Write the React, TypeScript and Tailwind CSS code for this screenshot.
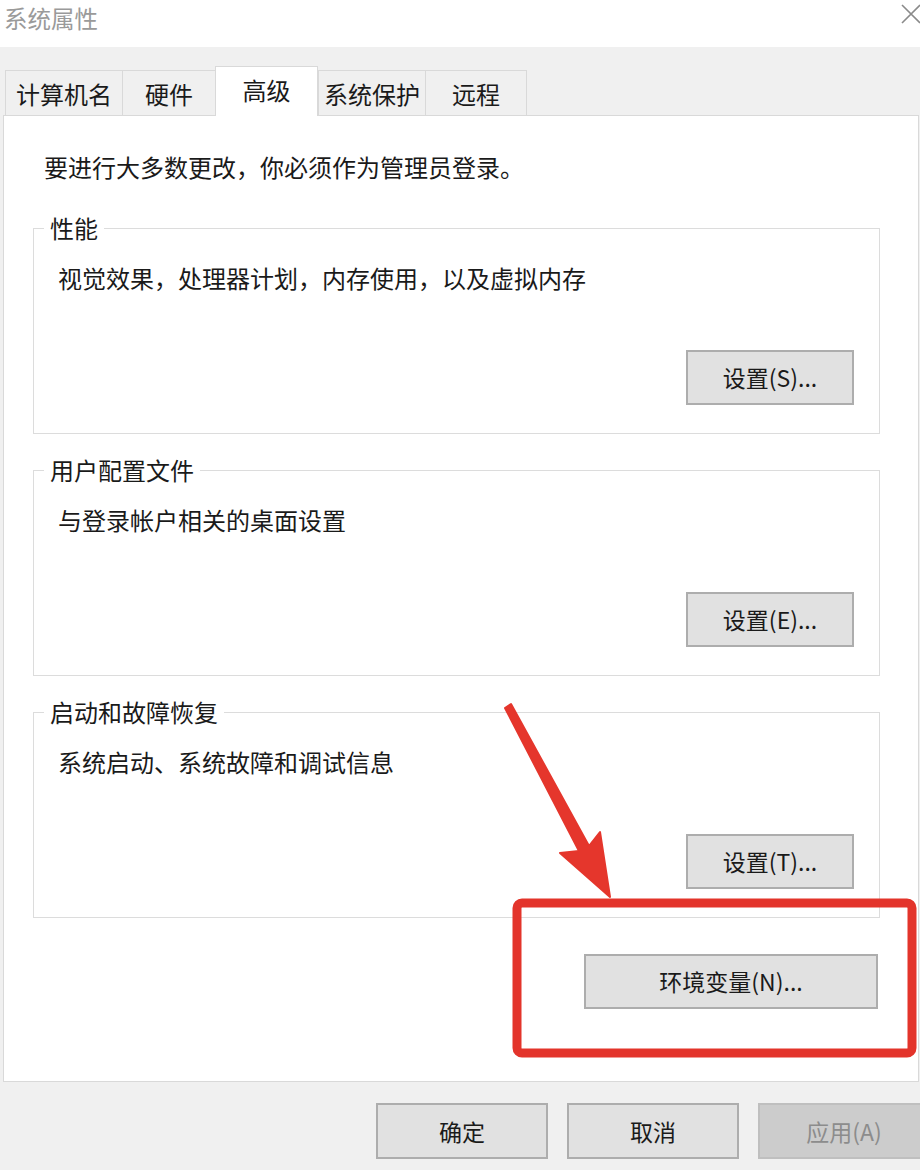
import React from "react";

const FONT = { fontFamily: '"Noto Sans CJK SC", "Noto Sans", sans-serif' };

function Btn({ label, className = "", disabled = false }: { label: string; className?: string; disabled?: boolean }) {
  return (
    <div
      className={
        "flex items-center justify-center text-[23px] " +
        (disabled
          ? "bg-[#cccccc] border-2 border-[#bfbfbf] text-[#8c8c8c] "
          : "bg-[#e1e1e1] border-2 border-[#adadad] text-[#1a1a1a] ") +
        className
      }
    >
      {label}
    </div>
  );
}

function Group({ title, desc, btn }: { title: string; desc: string; btn: string }) {
  return (
    <fieldset className="w-[847px] border border-[#dcdcdc] pl-[24px] pr-[25px] pb-[28px]">
      <legend className="-ml-[14px] px-[6px] text-[24px] leading-[32px] text-[#1a1a1a]">{title}</legend>
      <div className="mt-[18px] text-[24px] leading-[32px] text-[#1a1a1a]">{desc}</div>
      <div className="flex justify-end mt-[56px]">
        <Btn label={btn} className="w-[168px] h-[55px]" />
      </div>
    </fieldset>
  );
}

export default function App() {
  const tabs = [
    { t: "计算机名", w: "w-[117px]" },
    { t: "硬件", w: "w-[93px]" },
    { t: "高级", w: "w-[103px]", sel: true },
    { t: "系统保护", w: "w-[107px]" },
    { t: "远程", w: "w-[102px]", last: true },
  ];
  return (
    <div className="relative w-[920px] h-[1170px] overflow-hidden bg-[#f0f0f0]" style={FONT}>
      {/* title bar */}
      <div className="h-[47px] bg-white flex items-center justify-between pl-[4px]">
        <span className="text-[23.5px] text-[#9a9a9a] leading-none -mt-[10px]">系统属性</span>
        <svg width="24" height="24" viewBox="0 0 24 24" className="mr-[-3px] -mt-[20px]">
          <path d="M3 3 L21 21 M21 3 L3 21" stroke="#8a8a8a" strokeWidth="1.6" fill="none" />
        </svg>
      </div>

      {/* tabs */}
      <div className="flex items-end pl-[5px] mt-[19px] h-[49px]">
        {tabs.map((tab) => (
          <div
            key={tab.t}
            className={
              "flex items-center justify-center text-[24px] text-[#1a1a1a] border-l border-t border-[#d9d9d9] " +
              tab.w +
              (tab.sel
                ? " relative z-10 h-[50px] -mb-px bg-white border-r pb-[4px]"
                : " h-[45px] bg-[#f0f0f0] pt-[2px]") +
              (tab.last ? " border-r" : "")
            }
          >
            {tab.t}
          </div>
        ))}
      </div>

      {/* panel */}
      <div className="ml-[3px] w-[916px] h-[967px] bg-white border border-[#d9d9d9] pl-[29px] flex flex-col">
        <div className="mt-[35px] ml-[11px] text-[24px] leading-[32px] text-[#1a1a1a]">
          要进行大多数更改，你必须作为管理员登录。
        </div>
        <div className="mt-[29px] flex flex-col gap-[20px]">
          <Group title="性能" desc="视觉效果，处理器计划，内存使用，以及虚拟内存" btn="设置(S)..." />
          <Group title="用户配置文件" desc="与登录帐户相关的桌面设置" btn="设置(E)..." />
          <Group title="启动和故障恢复" desc="系统启动、系统故障和调试信息" btn="设置(T)..." />
        </div>
        <Btn label="环境变量(N)..." className="mt-[36px] ml-[551px] w-[294px] h-[55px]" />
      </div>

      {/* bottom buttons */}
      <div className="flex gap-[19px] ml-[376px] mt-[21px]">
        <Btn label="确定" className="w-[172px] h-[56px] shrink-0" />
        <Btn label="取消" className="w-[172px] h-[56px] shrink-0" />
        <Btn label="应用(A)" disabled className="w-[172px] h-[56px] shrink-0" />
      </div>

      {/* annotation overlay */}
      <svg className="absolute left-0 top-0 pointer-events-none" width="920" height="1170" viewBox="0 0 920 1170">
        <rect x="517" y="903" width="395" height="150" rx="5" ry="5" fill="none" stroke="#e3342b" strokeWidth="9" />
        <polygon
          points="505,708 511,704 589,846 600,832 610,897 560,853 579,851"
          fill="#e5362c"
          stroke="#e5362c"
          strokeWidth="2"
          strokeLinejoin="round"
        />
      </svg>
    </div>
  );
}
